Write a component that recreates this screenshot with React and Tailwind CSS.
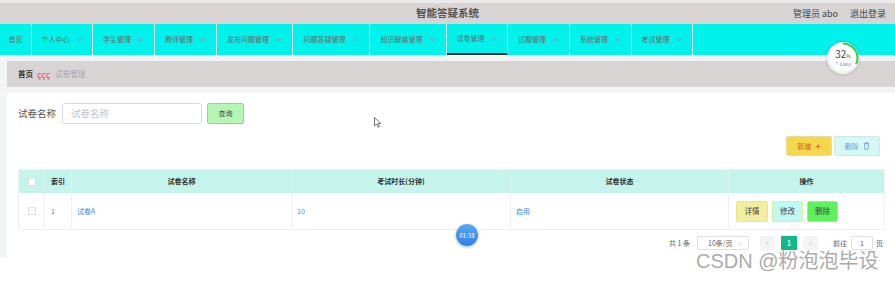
import React from 'react';

const navItems = [
  { label: '首页', w: 'w-[32px]', arrow: false },
  { label: '个人中心', w: 'w-[61px]', arrow: true },
  { label: '学生管理', w: 'w-[62px]', arrow: true },
  { label: '教师管理', w: 'w-[62px]', arrow: true },
  { label: '发布问题管理', w: 'w-[76px]', arrow: true },
  { label: '问题答疑管理', w: 'w-[77px]', arrow: true },
  { label: '知识解惑管理', w: 'w-[77px]', arrow: true },
  { label: '试卷管理', w: 'w-[61px]', arrow: true, active: true },
  { label: '试题管理', w: 'w-[62px]', arrow: true },
  { label: '系统管理', w: 'w-[62px]', arrow: true },
  { label: '考试管理', w: 'w-[61px]', arrow: true },
];

const Chevron = () => (
  <svg className="w-[7px] h-[7px] ml-[6px] shrink-0 text-[#7da4c2]" viewBox="0 0 10 10" fill="none" stroke="currentColor" strokeWidth="1.5">
    <path d="M1.5 3.5 L5 7 L8.5 3.5" />
  </svg>
);

export default function App() {
  return (
    <div
      className="relative w-[895px] h-[281px] overflow-hidden bg-white text-[#555]"
      style={{ fontFamily: '"Noto Sans CJK SC", "Noto Sans", sans-serif' }}
    >
      {/* Header */}
      <div className="h-[3px] bg-[#ecebeb]" />
      <div className="h-[21px] bg-[#d9d4d4] grid grid-cols-3 items-center">
        <div />
        <div className="text-center text-[10.5px] font-semibold text-[#555] leading-none">智能答疑系统</div>
        <div className="flex justify-end gap-[12px] pr-[9px] text-[9px] text-[#444]">
          <span>管理员 abo</span>
          <span>退出登录</span>
        </div>
      </div>

      {/* Nav */}
      <div className="h-[31px] bg-[#00f2ea] flex">
        {navItems.map((item) => (
          <div
            key={item.label}
            className={`${item.w} h-full flex items-center justify-center border-r border-[#e6fdfc] text-[7px] text-[#6b6b6b] ${item.active ? 'border-b-2 border-b-[#333]' : ''}`}
          >
            <span>{item.label}</span>
            {item.arrow && <Chevron />}
          </div>
        ))}
      </div>

      {/* Body */}
      <div className="flex bg-[#f3f4f6] h-[203px]">
        <div className="w-[7px]" />
        <div className="flex-1 flex flex-col">
          {/* Breadcrumb */}
          <div className="mt-[6px] h-[26px] bg-[#d9d4d4] flex items-center pl-[11px] text-[7.5px]">
            <span className="font-bold text-[#333]">首页</span>
            <span className="ml-[4px] text-[#e8486a] text-[9px] leading-none">ççç</span>
            <span className="ml-[5px] text-[#a0a8b8]">试卷管理</span>
          </div>

          {/* Panel */}
          <div className="mt-[6px] flex-1 bg-white pl-[11px] pr-[10px] pt-[10px]">
            {/* Search */}
            <div className="flex items-center h-[21px]">
              <span className="w-[38px] text-[9.5px] text-[#555]">试卷名称</span>
              <div className="ml-[6px] w-[140px] h-[21px] border border-[#d8dadf] rounded-[3px] flex items-center pl-[8px] text-[9.5px] text-[#c0c4cc]">
                试卷名称
              </div>
              <div className="ml-[5px] w-[37px] h-[21px] bg-[#b4f6b3] border border-[#93d49a] rounded-[2px] flex items-center justify-center text-[7px] text-[#444]">
                查询
              </div>
            </div>

            {/* Add / Delete */}
            <div className="flex justify-end mt-[12px] pr-[5px] gap-[2px]">
              <div className="w-[46px] h-[20px] bg-[#f4d84c] border border-[#eadba3] rounded-[2px] flex items-center justify-center text-[7px] text-[#e0502c]">
                新增 <span className="ml-[4px] text-[10px] leading-none">+</span>
              </div>
              <div className="w-[46px] h-[20px] bg-[#d6f8f5] border border-[#d0e6ea] rounded-[2px] flex items-center justify-center text-[7px] text-[#5f9fd8]">
                删除
                <svg className="ml-[4px] w-[7px] h-[8px]" viewBox="0 0 10 12" fill="none" stroke="currentColor" strokeWidth="1.2">
                  <path d="M1 2.5 H9 M3.5 2.5 V1 H6.5 V2.5 M2 2.5 L2.5 11 H7.5 L8 2.5" />
                </svg>
              </div>
            </div>

            {/* Table */}
            <div className="mt-[13px] border border-[#eef0f3] text-[7px]">
              <div className="flex h-[23px] bg-[#c5f4ec] font-bold text-[#2f2f2f]">
                <div className="w-[26px] flex items-center justify-center border-r border-[#d8f7f2]">
                  <div className="w-[8px] h-[8px] bg-white border border-[#dcdfe6] rounded-[1px]" />
                </div>
                <div className="w-[27px] flex items-center pl-[6px] border-r border-[#d8f7f2]">索引</div>
                <div className="w-[220px] flex items-center justify-center border-r border-[#d8f7f2]">试卷名称</div>
                <div className="w-[219px] flex items-center justify-center border-r border-[#d8f7f2]">考试时长(分钟)</div>
                <div className="w-[218px] flex items-center justify-center border-r border-[#d8f7f2]">试卷状态</div>
                <div className="flex-1 flex items-center justify-center">操作</div>
              </div>
              <div className="flex h-[36px] text-[#3d88d8]">
                <div className="w-[26px] flex items-center justify-center border-r border-[#eef0f3]">
                  <div className="w-[8px] h-[8px] bg-white border border-[#dcdfe6] rounded-[1px]" />
                </div>
                <div className="w-[27px] flex items-center pl-[6px] border-r border-[#eef0f3]">1</div>
                <div className="w-[220px] flex items-center pl-[5px] border-r border-[#eef0f3]">试卷A</div>
                <div className="w-[219px] flex items-center pl-[5px] border-r border-[#eef0f3]">10</div>
                <div className="w-[218px] flex items-center pl-[5px] border-r border-[#eef0f3]">启用</div>
                <div className="flex-1 flex items-center pl-[7px] gap-[4px] text-[7.5px] text-[#444]">
                  <div className="w-[32px] h-[21px] bg-[#f2ee9f] border border-[#e6e58c] rounded-[2px] flex items-center justify-center">详情</div>
                  <div className="w-[31px] h-[21px] bg-[#c2f8f2] border border-[#d6f0a0] rounded-[2px] flex items-center justify-center">修改</div>
                  <div className="w-[31px] h-[21px] bg-[#5ef05d] border border-[#9ef08e] rounded-[2px] flex items-center justify-center">删除</div>
                </div>
              </div>
            </div>

            {/* Pagination */}
            <div className="flex justify-end items-center mt-[6px] pr-[2px] text-[7px] text-[#606266]">
              <span>共 1 条</span>
              <div className="ml-[7px] w-[52px] h-[14px] border border-[#dcdfe6] rounded-[2px] flex items-center justify-between pl-[10px] pr-[6px]">
                <span>10条/页</span>
                <svg className="w-[5px] h-[5px] text-[#c0c4cc]" viewBox="0 0 10 10" fill="none" stroke="currentColor" strokeWidth="1.4">
                  <path d="M1.5 3.5 L5 7 L8.5 3.5" />
                </svg>
              </div>
              <div className="ml-[11px] w-[15px] h-[14px] bg-[#f4f4f5] flex items-center justify-center text-[#c0c4cc] text-[9px]">‹</div>
              <div className="ml-[6px] w-[16px] h-[14px] bg-[#13b886] text-white font-semibold flex items-center justify-center">1</div>
              <div className="ml-[6px] w-[15px] h-[14px] bg-[#f4f4f5] flex items-center justify-center text-[#c0c4cc] text-[9px]">›</div>
              <span className="ml-[15px]">前往</span>
              <div className="ml-[4px] w-[22px] h-[14px] border border-[#dcdfe6] rounded-[2px] flex items-center justify-center">1</div>
              <span className="ml-[3px]">页</span>
            </div>
          </div>
        </div>
      </div>

      {/* Progress badge */}
      <div className="absolute left-[827px] top-[42px] w-[32px] h-[32px] rounded-full bg-white shadow-[0_0_3px_rgba(0,0,0,0.25)]">
        <svg className="absolute inset-0" viewBox="0 0 32 32">
          <circle cx="16" cy="16" r="14.5" fill="none" stroke="#e8f5ea" strokeWidth="2" />
          <circle cx="16" cy="16" r="14.5" fill="none" stroke="#39c955" strokeWidth="2" strokeDasharray="29 92" transform="rotate(-90 16 16)" />
        </svg>
        <div className="absolute left-0 right-0 top-[7px] text-center text-[10px] leading-[10px] text-[#444]">
          32<span className="text-[5px]">%</span>
        </div>
        <div className="absolute left-0 right-0 top-[20px] text-center text-[4px] leading-[4px] text-[#666]">
          <span className="text-[#3b82f6]">↑</span> 0.0K/s
        </div>
      </div>

      {/* Timer */}
      <div className="absolute left-[456px] top-[224px] w-[22px] h-[22px] rounded-full bg-gradient-to-b from-[#5aa9f7] to-[#2f7de6] shadow-[0_1px_3px_rgba(47,125,230,0.5)] flex items-center justify-center text-[6px] text-white">
        01:38
      </div>

      {/* Cursor */}
      <svg className="absolute left-[374px] top-[117px] w-[8px] h-[11px]" viewBox="0 0 8 11">
        <path d="M0.5 0.5 L0.5 9 L2.6 7 L4.2 10.3 L5.4 9.7 L3.9 6.6 L6.8 6.5 Z" fill="white" stroke="#555" strokeWidth="0.8" />
      </svg>

      {/* Watermark */}
      <div className="absolute left-[696px] top-[251px] text-[20px] text-[#ababab] leading-none" style={{ fontFamily: '"Liberation Sans", "Noto Sans CJK SC", sans-serif' }}>
        CSDN @粉泡泡毕设
      </div>
    </div>
  );
}
